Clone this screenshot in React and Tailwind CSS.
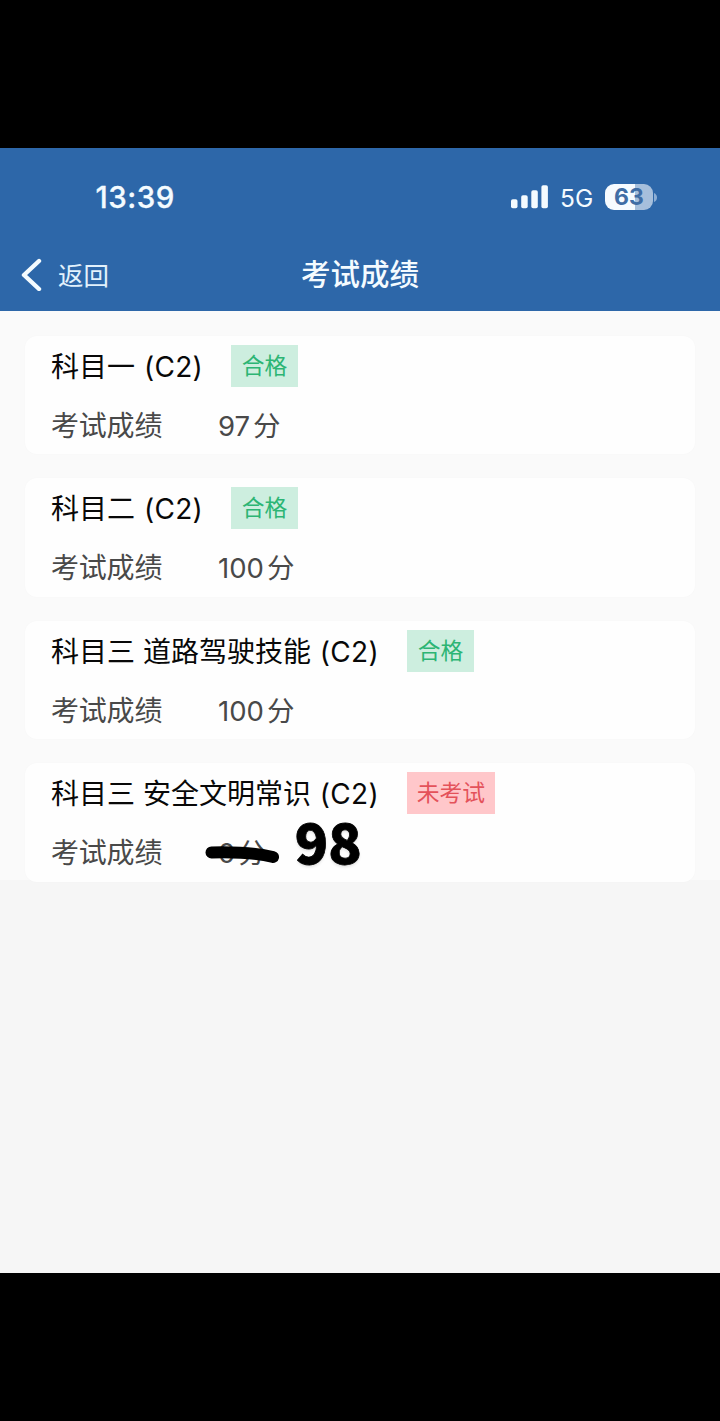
const font = "font-['Inter','Noto_Sans_CJK_SC',sans-serif]";

const results = [
  { title: "科目一", grade: "(C2)", score: "97", status: "合格", passed: true },
  { title: "科目二", grade: "(C2)", score: "100", status: "合格", passed: true },
  { title: "科目三 道路驾驶技能", grade: "(C2)", score: "100", status: "合格", passed: true },
  { title: "科目三 安全文明常识", grade: "(C2)", score: "0", status: "未考试", passed: false, corrected: "98" },
];

function StatusBar() {
  return (
    <div className="flex h-[98px] items-center pl-[95.5px] pr-[63px] text-[#f4fbff]">
      <span className="text-[29.5px] font-medium leading-8 tracking-[0.5px] [-webkit-text-stroke:0.3px_#f4fbff]">13:39</span>
      <div className="ml-auto flex items-center">
        <svg width="38" height="24" viewBox="0 0 38 24" fill="currentColor">
          <rect x="0" y="14.2" width="6.5" height="9" rx="1.8" />
          <rect x="10.2" y="10.2" width="6.5" height="13" rx="1.8" />
          <rect x="20.3" y="5.2" width="6.5" height="18" rx="1.8" />
          <rect x="30.4" y="0.2" width="6.5" height="23" rx="1.8" />
        </svg>
        <span className="ml-[11px] w-[34px] pt-[2px] text-[24.5px] leading-8">5G</span>
        <div className="ml-[11px] flex h-[26px] w-[48px] items-center justify-center rounded-[9px] bg-linear-to-r from-[#f6fbff] from-63% to-[#a6bfdc] to-63% text-[23px] font-bold leading-none text-[#3f6da5]">
          63
        </div>
        <svg className="ml-[1px]" width="3" height="9" viewBox="0 0 3 9" fill="#8daed4">
          <path d="M0 0Q3 1.5 3 4.5T0 9Z" />
        </svg>
      </div>
    </div>
  );
}

function NavBar() {
  return (
    <div className="grid h-[65px] grid-cols-3 pb-[9px] text-[#f4fbff]">
      <div className="flex items-center pl-[20px]">
        <svg width="22" height="34" viewBox="0 0 22 34" fill="none" stroke="currentColor" strokeWidth="4.4" strokeLinecap="round" strokeLinejoin="round">
          <path d="M19 4L4 18L19 32" />
        </svg>
        <span className="ml-[16px] pt-[4px] text-[25.5px] leading-8 text-[#e2f1fc]">返回</span>
      </div>
      <h1 className="flex items-center justify-center text-[29.5px] font-medium leading-8">考试成绩</h1>
    </div>
  );
}

function ResultCard({ title, grade, score, status, passed, corrected }) {
  return (
    <section className="h-[118.4px] shrink-0 rounded-[12px] bg-[#fefefe] px-[26px] pt-[9px] shadow-[0_0_2px_rgba(0,0,0,0.025)]">
      <div className="flex h-[42px] items-center">
        <h2 className="whitespace-nowrap pt-[2px] text-[28px] leading-7 text-[#080808]">
          {title} <span className="ml-[1px] tracking-[0.3px]">{grade}</span>
        </h2>
        <span
          className={`ml-[28px] flex h-[42px] items-center justify-center text-[22.8px] leading-8 ${
            passed ? "w-[67px] bg-[#cdeedf] text-[#2cb574]" : "w-[88px] bg-[#ffc7ca] text-[#e4525a]"
          }`}
        >
          {status}
        </span>
      </div>
      <div className="mt-[17px] flex h-[44px] items-center text-[28px] leading-10 text-[#494949]">
        <span className="w-[167px] tracking-[-0.2px]">考试成绩</span>
        <span className="relative flex items-center gap-[3px] text-[27.5px]">
          <span>{score}</span>
          <span>分</span>
          {corrected && (
            <svg className="absolute -left-[13px] top-[7px]" width="76" height="26" viewBox="0 0 76 26" fill="none" stroke="#000" strokeLinecap="round">
              <path d="M6.5 12.5C25 12 49 12.5 68 17" strokeWidth="12" />
            </svg>
          )}
        </span>
        {corrected && (
          <span className="ml-[29px] -mt-[26px] font-['Noto_Sans_CJK_SC',sans-serif] text-[55px] font-black leading-none text-black [-webkit-text-stroke:0.8px_#000] [text-shadow:0_2px_3px_rgba(0,0,0,0.12)]">
            {corrected}
          </span>
        )}
      </div>
    </section>
  );
}

export default function App() {
  return (
    <div className={`${font} flex h-[1421px] w-[720px] flex-col bg-black`}>
      <div className="h-[148px] shrink-0" />
      <header className="h-[163px] shrink-0 bg-[#2d67a9]">
        <StatusBar />
        <NavBar />
      </header>
      <main className="h-[962px] shrink-0 bg-[#f6f6f6]">
        <div className="flex h-[569px] flex-col gap-[24px] bg-[#fafafa] px-[25px] pt-[25px]">
          {results.map((result) => (
            <ResultCard key={result.title} {...result} />
          ))}
        </div>
      </main>
    </div>
  );
}
